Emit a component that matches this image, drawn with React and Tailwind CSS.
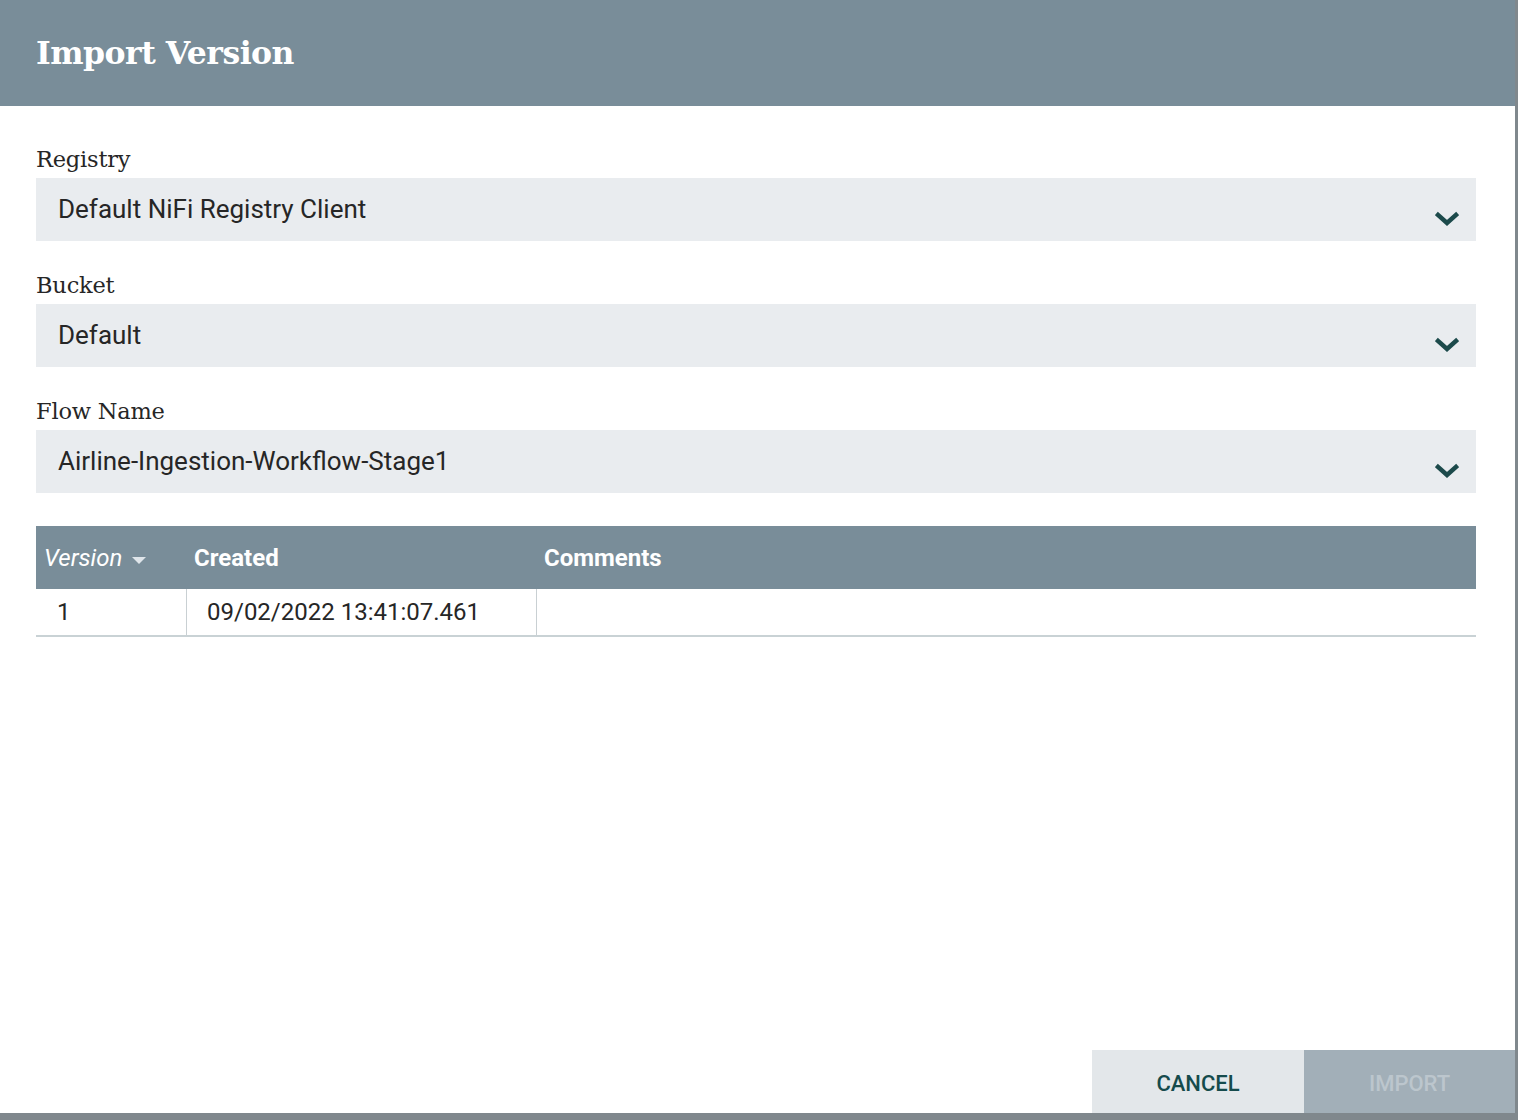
import React from "react";

const Chevron = () => (
  <svg width="24" height="16" viewBox="0 0 24 16" className="shrink-0">
    <path d="M3 4 L12 12 L21 4" fill="none" stroke="#1c4a4b" strokeWidth="4.5" strokeLinecap="square" />
  </svg>
);

function Field({ label, value }) {
  return (
    <div className="flex flex-col">
      <div className="h-[33px] flex items-center pb-[4px] text-[#262626]" style={{ fontFamily: '"DejaVu Serif", serif' }}>
        <span className="text-[22.5px] tracking-[-0.2px]">{label}</span>
      </div>
      <div className="h-[63px] bg-[#e9ecef] flex items-center justify-between pl-[22px] pr-[17px]">
        <span className="text-[26px] text-[#262626]" style={{ fontFamily: 'Roboto, sans-serif' }}>{value}</span>
        <div className="pt-[19px]"><Chevron /></div>
      </div>
    </div>
  );
}

export default function App() {
  return (
    <div className="w-[1518px] h-[1120px] bg-[#80888d] overflow-hidden">
      <div className="w-[1515px] h-[1113px] bg-white flex flex-col">
        <div className="h-[106px] bg-[#798d99] flex items-center px-[36px]">
          <h1 className="text-white font-bold text-[31.5px] tracking-[-0.5px]" style={{ fontFamily: '"DejaVu Serif", serif' }}>Import Version</h1>
        </div>
        <div className="flex-1 flex flex-col px-[36px] pt-[39px]" style={{ fontFamily: 'Roboto, sans-serif' }}>
          <div className="w-[1440px] flex flex-col gap-[30px]">
            <Field label="Registry" value="Default NiFi Registry Client" />
            <Field label="Bucket" value="Default" />
            <Field label="Flow Name" value="Airline-Ingestion-Workflow-Stage1" />
          </div>
          <div className="w-[1440px] mt-[33px]">
            <div className="h-[63px] bg-[#798d99] flex text-white text-[24px]">
              <div className="w-[151px] flex items-center pl-[8px] gap-[10px]">
                <span className="italic">Version</span>
                <svg width="14" height="8" viewBox="0 0 14 8" className="mt-[6px]"><path d="M0 0 L14 0 L7 7 Z" fill="#dfe5ea" /></svg>
              </div>
              <div className="w-[350px] flex items-center pl-[7px] font-bold">Created</div>
              <div className="flex-1 flex items-center pl-[7px] font-bold">Comments</div>
            </div>
            <div className="h-[48px] flex text-[24px] text-[#262626] border-b-2 border-[#c9d2d5]">
              <div className="w-[151px] flex items-center pl-[21px] border-r border-[#c9d0d3]">1</div>
              <div className="w-[350px] flex items-center pl-[20px] border-r border-[#c9d0d3]">09/02/2022 13:41:07.461</div>
              <div className="flex-1"></div>
            </div>
          </div>
          <div className="flex-1"></div>
        </div>
        <div className="flex justify-end" style={{ fontFamily: 'Roboto, sans-serif' }}>
          <button className="w-[212px] h-[63px] bg-[#e3e7ea] text-[#154b4c] text-[22px] font-medium flex items-center justify-center pt-[4px]">CANCEL</button>
          <button className="w-[211px] h-[63px] bg-[#a2afb8] text-[#bcc6cd] text-[22px] font-medium flex items-center justify-center pt-[4px]">IMPORT</button>
        </div>
      </div>
    </div>
  );
}
